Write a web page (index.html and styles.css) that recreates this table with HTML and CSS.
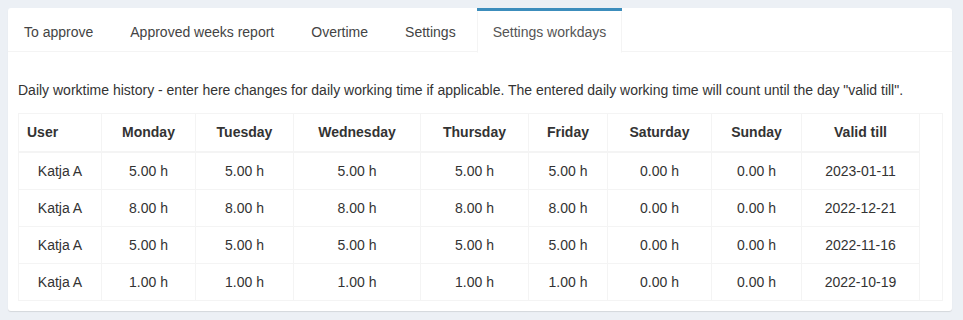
FILE: index.html
```html
<!DOCTYPE html>
<html lang="en">
<head>
<meta charset="utf-8">
<title>Settings workdays</title>
<link rel="stylesheet" href="styles.css">
</head>
<body>
<div class="nav-tabs-custom">
  <ul class="nav-tabs">
    <li><a href="#">To approve</a></li>
    <li><a href="#">Approved weeks report</a></li>
    <li><a href="#">Overtime</a></li>
    <li><a href="#">Settings</a></li>
    <li class="active"><a href="#">Settings workdays</a></li>
  </ul>
  <div class="tab-content">
    <p class="intro">Daily worktime history - enter here changes for daily working time if applicable. The entered daily working time will count until the day "valid till".</p>
    <div class="dt-scroll">
      <table class="dt dt-head">
        <colgroup>
          <col class="c-user"><col class="c-mon"><col class="c-tue"><col class="c-wed"><col class="c-thu"><col class="c-fri"><col class="c-sat"><col class="c-sun"><col class="c-valid"><col class="c-gutter">
        </colgroup>
        <thead>
          <tr>
            <th class="left">User</th>
            <th>Monday</th>
            <th>Tuesday</th>
            <th>Wednesday</th>
            <th>Thursday</th>
            <th>Friday</th>
            <th>Saturday</th>
            <th>Sunday</th>
            <th>Valid till</th>
            <th class="gutter"></th>
          </tr>
        </thead>
      </table>
      <table class="dt dt-body">
        <colgroup>
          <col class="c-user"><col class="c-mon"><col class="c-tue"><col class="c-wed"><col class="c-thu"><col class="c-fri"><col class="c-sat"><col class="c-sun"><col class="c-valid">
        </colgroup>
        <tbody>
          <tr><td>Katja A</td><td>5.00 h</td><td>5.00 h</td><td>5.00 h</td><td>5.00 h</td><td>5.00 h</td><td>0.00 h</td><td>0.00 h</td><td>2023-01-11</td></tr>
          <tr><td>Katja A</td><td>8.00 h</td><td>8.00 h</td><td>8.00 h</td><td>8.00 h</td><td>8.00 h</td><td>0.00 h</td><td>0.00 h</td><td>2022-12-21</td></tr>
          <tr><td>Katja A</td><td>5.00 h</td><td>5.00 h</td><td>5.00 h</td><td>5.00 h</td><td>5.00 h</td><td>0.00 h</td><td>0.00 h</td><td>2022-11-16</td></tr>
          <tr><td>Katja A</td><td>1.00 h</td><td>1.00 h</td><td>1.00 h</td><td>1.00 h</td><td>1.00 h</td><td>0.00 h</td><td>0.00 h</td><td>2022-10-19</td></tr>
        </tbody>
      </table>
    </div>
  </div>
</div>
</body>
</html>
```

FILE: styles.css
```css
html, body {
  margin: 0;
  padding: 0;
}
body {
  background: #ecf0f5;
  padding: 8px 11px 8px 8px;
  font-family: "Liberation Sans", Arial, Helvetica, sans-serif;
  font-size: 14px;
  line-height: 20px;
  color: #333;
}
.nav-tabs-custom {
  background: #fff;
  border-radius: 3px;
  box-shadow: 0 1px 1px rgba(0, 0, 0, 0.1);
}
.nav-tabs {
  display: flex;
  list-style: none;
  margin: 0;
  padding: 0;
  border-bottom: 1px solid #f4f4f4;
  border-top-left-radius: 3px;
  border-top-right-radius: 3px;
}
.nav-tabs li {
  border-top: 3px solid transparent;
  margin-bottom: -2px;
  margin-right: 5px;
}
.nav-tabs li a {
  display: block;
  padding: 10px 15px;
  border: 1px solid transparent;
  color: #444;
  text-decoration: none;
  line-height: 20px;
}
.nav-tabs li.active {
  border-top-color: #3c8dbc;
}
.nav-tabs li.active a {
  background: #fff;
  color: #555;
  border-left-color: #f4f4f4;
  border-right-color: #f4f4f4;
}
.tab-content {
  padding: 10px;
}
.intro {
  margin: 18px 0 13px;
}
.dt-scroll {
  border: 1px solid #f4f4f4;
  width: 923px;
}
.dt {
  border-collapse: separate;
  border-spacing: 0;
  table-layout: fixed;
}
.dt-head { width: 923px; }
.dt-body { width: 901px; }
.c-user { width: 83px; }
.c-mon { width: 94px; }
.c-tue { width: 98px; }
.c-wed { width: 127px; }
.c-thu { width: 108px; }
.c-fri { width: 79px; }
.c-sat { width: 104px; }
.c-sun { width: 90px; }
.c-valid { width: 118px; }
.c-gutter { width: 22px; }
.dt th,
.dt td {
  box-sizing: border-box;
  border-right: 1px solid #f4f4f4;
  text-align: center;
  line-height: 20px;
  white-space: nowrap;
}
.dt th {
  padding: 8px 8px 9px;
  font-weight: bold;
  border-bottom: 2px solid #f4f4f4;
}
.dt th.left {
  text-align: left;
}
.dt th.gutter {
  border-right: 0;
  border-bottom: 0;
}
.dt td {
  padding: 8px;
  border-bottom: 1px solid #f4f4f4;
}
.dt tr:last-child td {
  border-bottom: 0;
}
```
